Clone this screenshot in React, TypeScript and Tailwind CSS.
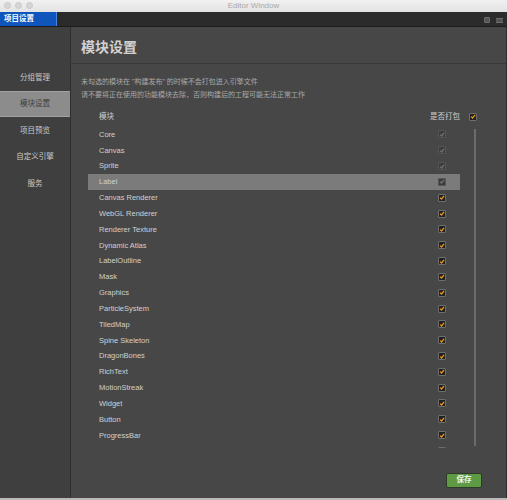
import React from "react";

const modules = [
  "Core",
  "Canvas",
  "Sprite",
  "Label",
  "Canvas Renderer",
  "WebGL Renderer",
  "Renderer Texture",
  "Dynamic Atlas",
  "LabelOutline",
  "Mask",
  "Graphics",
  "ParticleSystem",
  "TiledMap",
  "Spine Skeleton",
  "DragonBones",
  "RichText",
  "MotionStreak",
  "Widget",
  "Button",
  "ProgressBar",
  "ScrollBar",
];

const locked = ["Core", "Canvas", "Sprite", "Label"];

const sideItems = ["分组管理", "模块设置", "项目预览", "自定义引擎", "服务"];

function Check({ disabled }: { disabled?: boolean }) {
  return (
    <span
      className={
        "flex h-[8px] w-[8px] items-center justify-center rounded-[1px] border " +
        (disabled ? "border-[#565656] bg-[#3c3c3c]" : "border-[#6e6e6e] bg-[#222]")
      }
    >
      <svg viewBox="0 0 10 10" className="h-[7px] w-[7px]">
        <path
          d="M1.8 5.2 L4.2 7.5 L8.5 2.4"
          fill="none"
          stroke={disabled ? "#747474" : "#f59a1c"}
          strokeWidth="2"
        />
      </svg>
    </span>
  );
}

export default function App() {
  return (
    <div
      className="flex h-[500px] w-[507px] flex-col overflow-hidden bg-[#474747]"
      style={{ fontFamily: '"Liberation Sans", "Noto Sans CJK SC", sans-serif' }}
    >
      {/* window title bar */}
      <div className="relative flex h-[12px] items-center justify-center bg-gradient-to-b from-[#f1f1f1] to-[#e3e3e3] text-[8px] text-[#a8a8a8]">
        <div className="absolute left-[4px] top-[2px] flex gap-[4px]">
          <span className="h-[7px] w-[7px] rounded-full border border-[#c9c9c9] bg-[#d6d6d6]" />
          <span className="h-[7px] w-[7px] rounded-full border border-[#c9c9c9] bg-[#d6d6d6]" />
          <span className="h-[7px] w-[7px] rounded-full border border-[#c9c9c9] bg-[#d6d6d6]" />
        </div>
        Editor Window
      </div>

      {/* tab bar */}
      <div className="flex h-[15px] items-end border-b border-[#1c1c1c] bg-[#2b2b2b]">
        <div className="flex h-[14px] w-[57px] items-center border-r border-[#4a86e0] bg-[#0f55bb] pl-[4px] text-[7.5px] font-bold text-white">
          项目设置
        </div>
        <div className="flex-1" />
        <div className="mb-[3px] mr-[4px] flex items-center gap-[6px]">
          <span className="h-[6px] w-[6px] rounded-[1px] border border-[#6d6d6d] bg-[#555]" />
          <span className="h-[5px] w-[7px] border-y border-[#6d6d6d] bg-[#555]" />
        </div>
      </div>

      <div className="flex flex-1 border-b-2 border-[#b9b9b9]">
        {/* sidebar */}
        <div className="flex w-[71px] flex-col border-r border-[#2f2f2f] bg-[#3f3f3f] pt-[37px]">
          {sideItems.map((s) => (
            <div
              key={s}
              className={
                "flex h-[26.5px] items-center justify-center text-[7.5px] " +
                (s === "模块设置"
                  ? "border-y border-[#a0a0a0] bg-[#8c8c8c] text-[#3e3e3e]"
                  : "text-[#c9c9c9]")
              }
            >
              {s}
            </div>
          ))}
        </div>

        {/* main */}
        <div className="flex flex-1 flex-col border-r border-[#2f2f2f]">
          <div className="h-[37px] border-b border-[#393939] pl-[10px] pt-[12px] text-[14px] font-bold leading-[16px] text-[#d2d2d2]">
            模块设置
          </div>
          <div className="pl-[10px] pt-[11px] text-[7px] leading-[13px] text-[#a9a9a9]">
            <div>未勾选的模块在 "构建发布" 的时候不会打包进入引擎文件</div>
            <div>请不要将正在使用的功能模块去除，否则构建后的工程可能无法正常工作</div>
          </div>

          <div className="ml-[17px] mt-[7.5px] flex h-[16px] w-[389px] items-center text-[7.5px] text-[#cfcfcf]">
            <span className="pl-[11px]">模块</span>
            <span className="flex-1" />
            <span>是否打包</span>
            <span className="ml-[9px]">
              <Check />
            </span>
          </div>

          <div className="ml-[17px] mt-[2px] flex h-[321px]">
            <div className="h-full w-[372px] overflow-hidden">
              {modules.map((m) => (
                <div
                  key={m}
                  className={
                    "flex h-[15.84px] items-center pl-[11px] pr-[14px] text-[7.5px] text-[#d0d0d0] " +
                    (m === "Label" ? "bg-[#7b7b7b]" : "")
                  }
                >
                  <span className="flex-1">{m}</span>
                  <Check disabled={locked.includes(m)} />
                </div>
              ))}
            </div>
            <div className="ml-[14px] mt-[2px] h-[317px] w-[2px] bg-[#6b6b6b]" />
          </div>

          <div className="flex flex-1 items-start justify-end pr-[24px] pt-[25px]">
            <button className="flex h-[15px] w-[36px] items-center justify-center rounded-[2px] border border-[#2e3a28] bg-[#5e9a44] text-[7.5px] font-bold text-[#eef5ea]">
              保存
            </button>
          </div>
        </div>
      </div>
    </div>
  );
}
